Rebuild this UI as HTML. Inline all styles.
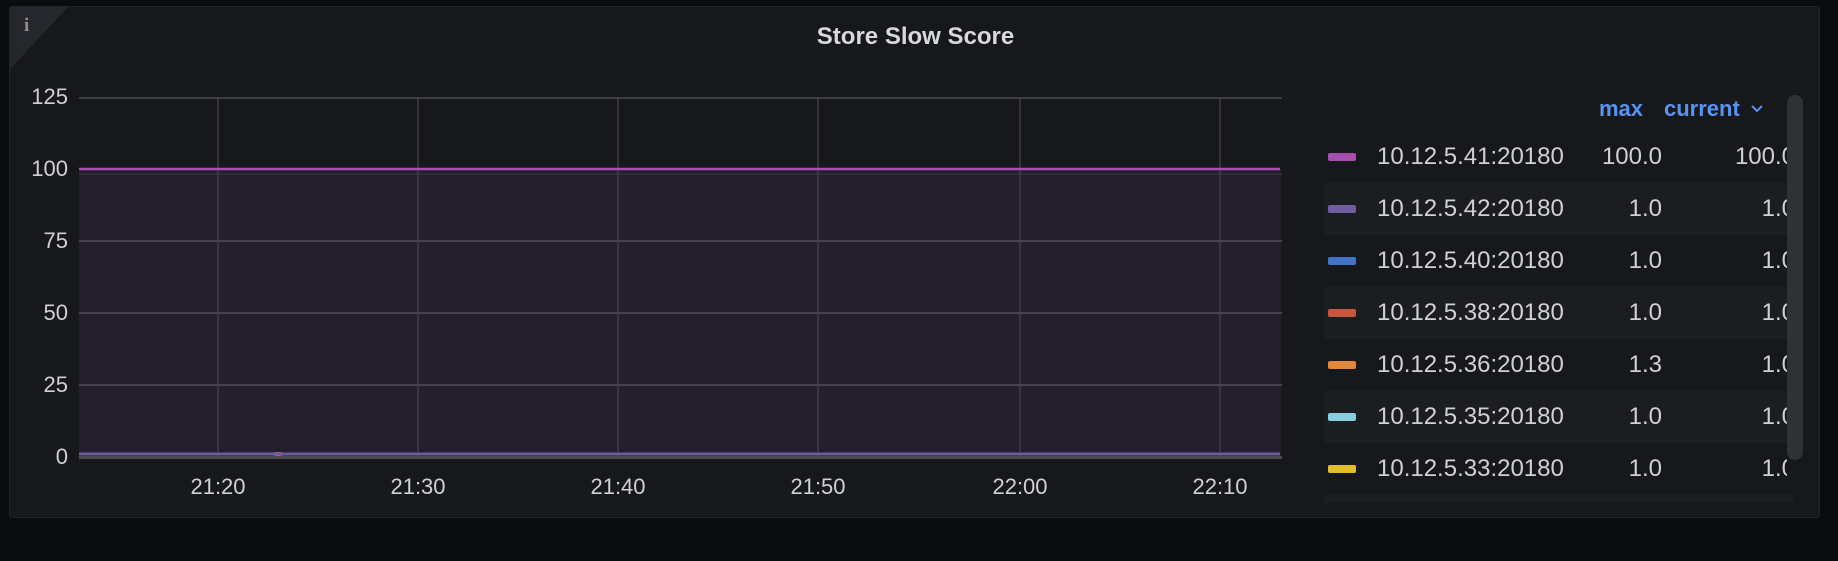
<!DOCTYPE html>
<html><head><meta charset="utf-8"><style>
*{margin:0;padding:0;box-sizing:border-box}
body{width:1838px;height:561px;background:#0b0c0e;font-family:"Liberation Sans",sans-serif;color:#d0d1d4;position:relative;overflow:hidden}
.panel{position:absolute;left:9px;top:6px;width:1811px;height:512px;background:#17181c;border:1px solid #222327;border-radius:3px;overflow:hidden}
.abs{position:absolute}
.yl{position:absolute;right:1770px;font-size:22px;transform:translateY(-50%);text-align:right;color:#d0d1d4}
.xl{position:absolute;top:474px;font-size:22px;transform:translateX(-50%);color:#d0d1d4}
.row{position:absolute;left:1324px;width:463px;height:52px}
.row.alt{background:#1c1d21}
.sw{position:absolute;left:4px;top:22px;width:28px;height:8px;border-radius:2px}
.lab{position:absolute;left:53px;top:12px;font-size:24px;white-space:nowrap}
.mx{position:absolute;right:137px;top:12px;font-size:24px}
.cu{position:absolute;right:-8px;top:12px;font-size:24px}
</style></head><body>
<div class="panel">
  <svg class="abs" style="left:0;top:0" width="60" height="63"><polygon points="0,0 58,0 0,62" fill="#25272c"/></svg>
  <div class="abs" style="left:14px;top:8px;font-size:19px;font-weight:bold;color:#8e8e8e;font-family:'Liberation Serif',serif">i</div>
  <div class="abs" style="left:0;width:1811px;top:16px;text-align:center;font-size:24px;font-weight:bold;color:#d8d9da">Store Slow Score</div>
</div>
<svg class="abs" style="left:0;top:0" width="1838" height="561">
  <rect x="79" y="169" width="1202" height="286" fill="#241e2d"/>
  <g stroke="#3d3d44" stroke-width="2">
    <line x1="79" y1="98" x2="1282" y2="98"/>
    <line x1="79" y1="241" x2="1282" y2="241" stroke="#46424d"/>
    <line x1="79" y1="313" x2="1282" y2="313" stroke="#46424d"/>
    <line x1="79" y1="385" x2="1282" y2="385" stroke="#46424d"/>
  </g>
  <g stroke="#45424c" stroke-width="1.3">
    <line x1="218" y1="97" x2="218" y2="458"/><line x1="418" y1="97" x2="418" y2="458"/>
    <line x1="618" y1="97" x2="618" y2="458"/><line x1="818" y1="97" x2="818" y2="458"/>
    <line x1="1020" y1="97" x2="1020" y2="458"/><line x1="1220" y1="97" x2="1220" y2="458"/>
  </g>
  <line x1="79" y1="169" x2="1280" y2="169" stroke="#aa4fb3" stroke-width="2.5"/>
  <line x1="79" y1="174" x2="1282" y2="174" stroke="#3d3a44" stroke-width="1"/>
  <rect x="79" y="456" width="1203" height="3" fill="#4a4a50"/>
  <ellipse cx="278" cy="454" rx="8" ry="2" fill="#c97a3a"/>
  <line x1="79" y1="454" x2="1280" y2="454" stroke="#6c5aa5" stroke-width="3"/>
</svg>
<div class="yl" style="top:97px">125</div>
<div class="yl" style="top:169px">100</div>
<div class="yl" style="top:241px">75</div>
<div class="yl" style="top:313px">50</div>
<div class="yl" style="top:385px">25</div>
<div class="yl" style="top:457px">0</div>
<div class="xl" style="left:218px">21:20</div>
<div class="xl" style="left:418px">21:30</div>
<div class="xl" style="left:618px">21:40</div>
<div class="xl" style="left:818px">21:50</div>
<div class="xl" style="left:1020px">22:00</div>
<div class="xl" style="left:1220px">22:10</div>

<div class="abs" style="left:1599px;top:96px;font-size:22px;font-weight:bold;color:#5794f2">max</div>
<div class="abs" style="left:1664px;top:96px;font-size:22px;font-weight:bold;color:#5794f2">current</div>
<svg class="abs" style="left:1750px;top:104px" width="14" height="10"><path d="M2 2 L7 7 L12 2" stroke="#5794f2" stroke-width="2" fill="none"/></svg>

<div class="abs" style="left:0;top:0;width:1787px;height:503px;overflow:hidden">
  <div class="row" style="top:131px"><div class="sw" style="background:#a64fb0"></div><div class="lab">10.12.5.41:20180</div><div class="mx" style="right:125px">100.0</div><div class="cu">100.0</div></div>
  <div class="row alt" style="top:183px"><div class="sw" style="background:#705da0"></div><div class="lab">10.12.5.42:20180</div><div class="mx" style="right:125px">1.0</div><div class="cu">1.0</div></div>
  <div class="row" style="top:235px"><div class="sw" style="background:#3f74c9"></div><div class="lab">10.12.5.40:20180</div><div class="mx" style="right:125px">1.0</div><div class="cu">1.0</div></div>
  <div class="row alt" style="top:287px"><div class="sw" style="background:#c8573f"></div><div class="lab">10.12.5.38:20180</div><div class="mx" style="right:125px">1.0</div><div class="cu">1.0</div></div>
  <div class="row" style="top:339px"><div class="sw" style="background:#e0893a"></div><div class="lab">10.12.5.36:20180</div><div class="mx" style="right:125px">1.3</div><div class="cu">1.0</div></div>
  <div class="row alt" style="top:391px"><div class="sw" style="background:#86cde0"></div><div class="lab">10.12.5.35:20180</div><div class="mx" style="right:125px">1.0</div><div class="cu">1.0</div></div>
  <div class="row" style="top:443px"><div class="sw" style="background:#e3bd2e"></div><div class="lab">10.12.5.33:20180</div><div class="mx" style="right:125px">1.0</div><div class="cu">1.0</div></div>
</div>
<div class="abs" style="left:1324px;top:495px;width:469px;height:8px;background:#1c1d21"></div>
<div class="abs" style="left:1787px;top:95px;width:16px;height:365px;background:#2e3236;border-radius:8px"></div>
</body></html>
